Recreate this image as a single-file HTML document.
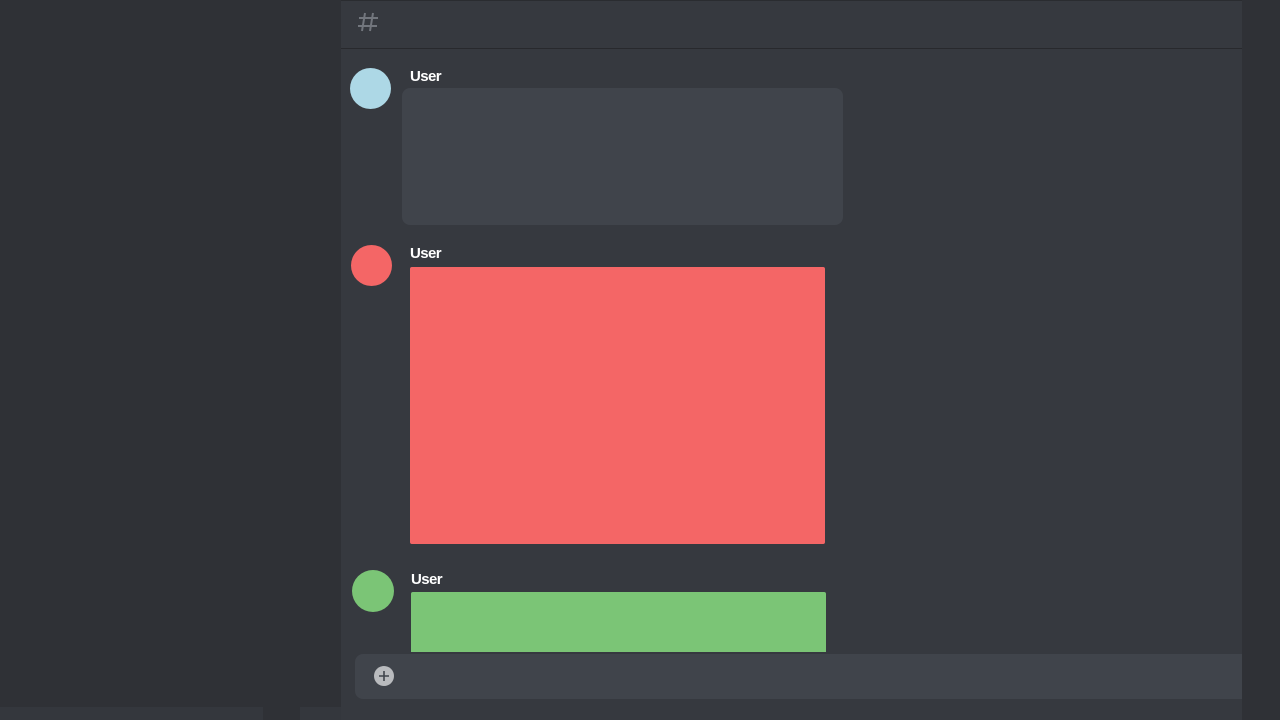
<!DOCTYPE html>
<html><head><style>
body{margin:0;width:1280px;height:720px;background:#2f3136;position:relative;overflow:hidden;font-family:"Liberation Sans",sans-serif}
.a{position:absolute}
.u{position:absolute;color:#fff;font-size:15px;font-weight:bold;letter-spacing:-0.6px}
</style></head><body>
<div class="a" style="left:0;top:707px;width:263px;height:13px;background:#34373d"></div>
<div class="a" style="left:300px;top:707px;width:41px;height:13px;background:#34373d"></div>
<div class="a" style="left:341px;top:0;width:901px;height:720px;background:#36393f"></div>
<div class="a" style="left:341px;top:48px;width:901px;height:1px;background:#28292d"></div>
<div class="a" style="left:341px;top:0;width:901px;height:1px;background:#2a2c30"></div>
<svg class="a" style="left:356px;top:11px" width="24" height="22" viewBox="0 0 24 22"><path d="M9 2L6 20M17 2L14 20M3 7H22M2 15H21" stroke="#72767d" stroke-width="2"/></svg>
<div class="a" style="left:350px;top:68px;width:41px;height:41px;border-radius:50%;background:#add8e6"></div>
<div class="u" style="left:410px;top:68px">User</div>
<div class="a" style="left:402px;top:88px;width:441px;height:137px;border-radius:8px;background:#40444b"></div>
<div class="a" style="left:351px;top:245px;width:41px;height:41px;border-radius:50%;background:#f46666"></div>
<div class="u" style="left:410px;top:245px">User</div>
<div class="a" style="left:410px;top:267px;width:415px;height:277px;border-radius:2px;background:#f46666"></div>
<div class="a" style="left:352px;top:570px;width:42px;height:42px;border-radius:50%;background:#7bc576"></div>
<div class="u" style="left:411px;top:571px">User</div>
<div class="a" style="left:411px;top:592px;width:415px;height:60px;border-radius:2px 2px 0 0;background:#7bc576"></div>
<div class="a" style="left:355px;top:654px;width:887px;height:45px;border-radius:8px 0 0 8px;background:#40444b"></div>
<svg class="a" style="left:374px;top:666px" width="22" height="22" viewBox="0 0 22 22"><circle cx="10" cy="10" r="10" fill="#b9bbbe"/><path d="M10 5v10M5 10h10" stroke="#40444b" stroke-width="1.6"/></svg>
</body></html>
